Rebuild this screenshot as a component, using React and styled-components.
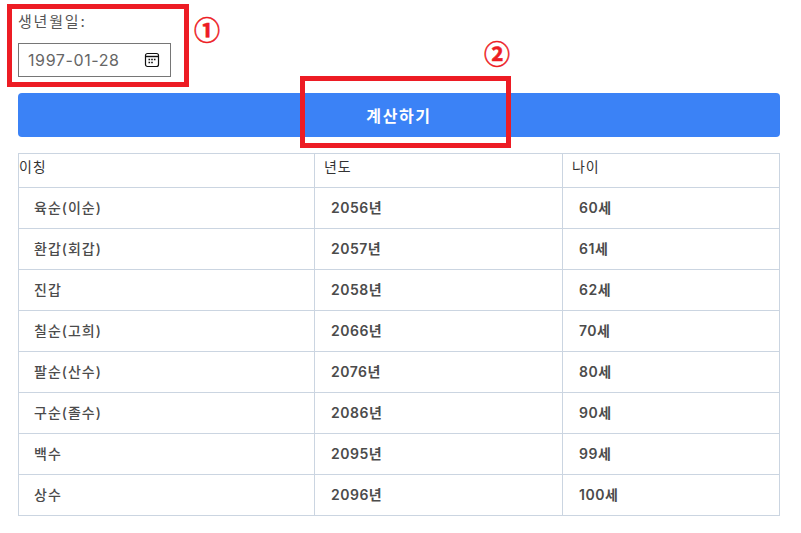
import styled, { createGlobalStyle } from 'styled-components';

const GlobalStyle = createGlobalStyle`
  html, body {
    margin: 0;
    padding: 0;
    background: #fff;
  }
  body {
    font-family: Inter, "Noto Sans CJK KR", sans-serif;
  }
`;

const rows = [
  ['육순(이순)', '2056년', '60세'],
  ['환갑(회갑)', '2057년', '61세'],
  ['진갑', '2058년', '62세'],
  ['칠순(고희)', '2066년', '70세'],
  ['팔순(산수)', '2076년', '80세'],
  ['구순(졸수)', '2086년', '90세'],
  ['백수', '2095년', '99세'],
  ['상수', '2096년', '100세'],
];

function CalendarIcon() {
  return (
    <svg width="16" height="16" viewBox="0 0 16 16" fill="none">
      <rect x="1.5" y="1.5" width="13" height="13" rx="2" stroke="#111" strokeWidth="1.2" />
      <path d="M2 4.5h12" stroke="#111" strokeWidth="1.4" />
      <path d="M4.5 7.5h1.6M7.2 7.5h1.6M9.9 7.5h1.6M4.5 10.5h1.6M7.2 10.5h1.6" stroke="#111" strokeWidth="1.5" />
    </svg>
  );
}

function App() {
  return (
    <Page>
      <GlobalStyle />
      <BirthField>
        <FieldLabel>생년월일:</FieldLabel>
        <DateBox>
          <span>1997-01-28</span>
          <CalendarIcon />
        </DateBox>
      </BirthField>
      <SubmitButton>계산하기</SubmitButton>
      <AgeTable>
        <colgroup>
          <col width="296" />
          <col width="248" />
          <col />
        </colgroup>
        <thead>
          <tr>
            <HeadCell>이칭</HeadCell>
            <HeadCell>년도</HeadCell>
            <HeadCell>나이</HeadCell>
          </tr>
        </thead>
        <tbody>
          {rows.map((row) => (
            <tr key={row[0]}>
              <NameCell>{row[0]}</NameCell>
              <ValueCell>{row[1]}</ValueCell>
              <ValueCell>{row[2]}</ValueCell>
            </tr>
          ))}
        </tbody>
      </AgeTable>
      <Callout $left={7} $top={4} $width={182} $height={83} />
      <Callout $left={300} $top={76} $width={211} $height={72} />
      <Marker $left={194} $top={14}>①</Marker>
      <Marker $left={484} $top={38}>②</Marker>
    </Page>
  );
}

const Page = styled.div`
  position: relative;
  width: 801px;
  height: 533px;
  padding: 13px 21px 0 18px;
  box-sizing: border-box;
  overflow: hidden;
`;

const BirthField = styled.div`
  display: flex;
  flex-direction: column;
  align-items: flex-start;
`;

const FieldLabel = styled.label`
  font-size: 15px;
  line-height: 17px;
  letter-spacing: 1.8px;
  color: #555;
  margin-bottom: 13px;
`;

const DateBox = styled.div`
  display: flex;
  align-items: center;
  justify-content: space-between;
  box-sizing: border-box;
  width: 153px;
  height: 34px;
  padding: 0 10px 0 9px;
  border: 1px solid #767676;
  font-size: 16px;
  letter-spacing: 0.6px;
  color: #666;
`;

const SubmitButton = styled.button`
  display: block;
  width: 100%;
  height: 44px;
  margin-top: 16px;
  border: 0;
  border-radius: 4px;
  background: #3b82f6;
  color: #fff;
  font-family: inherit;
  font-size: 16px;
  font-weight: 700;
  letter-spacing: 1.6px;
`;

const AgeTable = styled.table`
  width: 100%;
  margin-top: 16px;
  border-collapse: collapse;
  table-layout: fixed;
  font-size: 14px;
`;

const HeadCell = styled.th`
  height: 34px;
  padding: 0 0 10px 0;
  border: 1px solid #cbd5e1;
  box-sizing: border-box;
  text-align: left;
  font-weight: 400;
  color: #333;
  letter-spacing: 0.8px;
  & + & {
    padding-left: 9px;
  }
`;

const NameCell = styled.td`
  height: 41px;
  padding: 0 15px 2px;
  box-sizing: border-box;
  border: 1px solid #cbd5e1;
  color: #4b4b4b;
  font-weight: 500;
  letter-spacing: 1px;
`;

const ValueCell = styled(NameCell)`
  padding: 0 16px 2px;
  font-weight: 600;
  letter-spacing: 0.5px;
`;

const Callout = styled.div`
  position: absolute;
  left: ${(p) => p.$left}px;
  top: ${(p) => p.$top}px;
  width: ${(p) => p.$width}px;
  height: ${(p) => p.$height}px;
  box-sizing: border-box;
  border: 5px solid #ed1c24;
`;

const Marker = styled.span`
  position: absolute;
  left: ${(p) => p.$left}px;
  top: ${(p) => p.$top}px;
  font-size: 26px;
  line-height: 30px;
  font-weight: 700;
  font-family: "Noto Sans CJK KR", sans-serif;
  color: #ed1c24;
  -webkit-text-stroke: 0.5px #ed1c24;
`;

export default App;
